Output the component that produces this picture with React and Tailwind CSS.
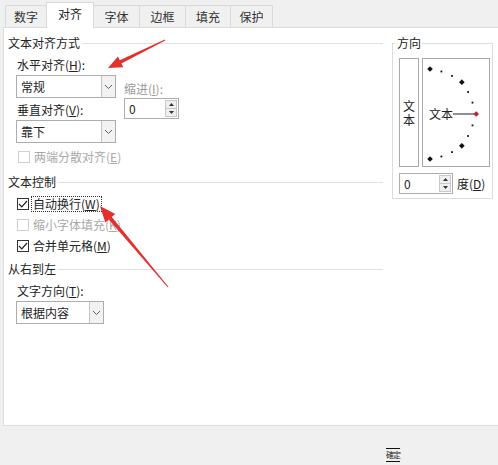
import React from "react";

const FONT = { fontFamily: '"Noto Sans CJK SC", "Noto Sans", sans-serif' };

function Tab({ label, w, active }) {
  if (active) {
    return (
      <div
        className={`${w} h-[26px] -mb-px bg-white border border-b-0 border-[#d9d9d9] -ml-px flex items-center justify-center text-[12px] leading-[14px] text-[#222] pb-[4px] relative z-10`}
      >
        {label}
      </div>
    );
  }
  return (
    <div
      className={`${w} h-[22px] bg-[#f0f0f0] border border-b-0 border-[#d9d9d9] -ml-px first:ml-0 flex items-center justify-center text-[12px] leading-[14px] text-[#333]`}
    >
      {label}
    </div>
  );
}

function Chevron() {
  return (
    <svg width="9" height="6" viewBox="0 0 9 6">
      <path d="M1 1 L4.5 4.5 L8 1" fill="none" stroke="#606060" strokeWidth="1" />
    </svg>
  );
}

function Select({ w, value }) {
  return (
    <div className={`${w} h-[23px] border border-[#adadad] bg-white flex`}>
      <div className="flex-1 flex items-center pl-[4px] text-[12px] leading-[14px] text-[#222]">{value}</div>
      <div className="w-[14px] border-l border-[#c4c4c4] bg-[#f2f2f2] flex items-center justify-center">
        <Chevron />
      </div>
    </div>
  );
}

function Spin({ w, value }) {
  return (
    <div className={`${w} h-[21px] border border-[#adadad] bg-white flex`}>
      <div className="flex-1 flex items-center pl-[4px] text-[12px] leading-[14px] text-[#222]">{value}</div>
      <div className="w-[12px] my-px mr-px flex flex-col border border-[#c8c8c8] bg-[#efefef]">
        <div className="flex-1 flex items-center justify-center border-b border-[#c8c8c8]">
          <svg width="5" height="3" viewBox="0 0 5 3"><path d="M0 3 L2.5 0 L5 3 Z" fill="#333" /></svg>
        </div>
        <div className="flex-1 flex items-center justify-center">
          <svg width="5" height="3" viewBox="0 0 5 3"><path d="M0 0 L2.5 3 L5 0 Z" fill="#333" /></svg>
        </div>
      </div>
    </div>
  );
}

function Check({ checked, disabled, label, hotkey, tail, focus }) {
  return (
    <div className="h-[21px] flex items-center">
      <div
        className={`w-[12px] h-[12px] border ${disabled ? "border-[#cfcfcf]" : "border-[#333]"} bg-white flex items-center justify-center`}
      >
        {checked && (
          <svg width="10" height="8" viewBox="0 0 10 8">
            <path d="M1 4 L3.8 6.8 L9 1" fill="none" stroke="#222" strokeWidth="1.2" />
          </svg>
        )}
      </div>
      <div
        className={`ml-[2px] px-[1px] text-[12px] leading-[14px] ${disabled ? "text-[#a8a8a8]" : "text-[#222]"} ${focus ? "border border-dotted border-[#333]" : "border border-transparent"}`}
      >
        {label}(<span className="underline">{hotkey}</span>){tail}
      </div>
    </div>
  );
}

function Heading({ text }) {
  return (
    <div className="flex items-center text-[12px] leading-[14px] text-[#222]">
      <span>{text}</span>
      <div className="flex-1 h-px bg-[#e0e0e0] ml-[2px]" />
    </div>
  );
}

function Dial() {
  const cx = 7;
  const cy = 55;
  const items = [];
  for (let a = 90; a >= -90; a -= 15) {
    const rad = (a * Math.PI) / 180;
    const big = a === 90 || a === 45 || a === -45 || a === -90;
    if (a === 0) continue;
    const r = big ? 45 : 44;
    const x = cx + r * Math.cos(rad);
    const y = cy - r * Math.sin(rad);
    if (big) {
      items.push(
        <rect key={a} x={x - 2} y={y - 2} width="4" height="4" fill="#111" transform={`rotate(45 ${x} ${y})`} />
      );
    } else {
      items.push(<rect key={a} x={x - 0.9} y={y - 0.9} width="1.8" height="1.8" fill="#111" />);
    }
  }
  return (
    <div className="relative w-[68px] h-[109px] border border-[#a8a8a8] bg-white">
      <svg className="absolute inset-0" width="68" height="109" viewBox="0 0 68 109">
        {items}
        <line x1="30" y1="55" x2="51" y2="55" stroke="#222" strokeWidth="1" />
        <rect x={51.2} y={53} width="4" height="4" fill="#b3262a" transform="rotate(45 53.2 55)" />
      </svg>
      <span className="absolute left-[6px] top-[48px] text-[12px] leading-[14px] text-[#222]">文本</span>
    </div>
  );
}

export default function App() {
  return (
    <div className="relative w-[498px] h-[465px] bg-[#f0f0f0] overflow-hidden" style={FONT}>
      {/* Tabs */}
      <div className="h-[27px] flex items-end pl-[5px]">
        <Tab label="数字" w="w-[42px]" />
        <Tab label="对齐" w="w-[48px]" active />
        <Tab label="字体" w="w-[47px]" />
        <Tab label="边框" w="w-[47px]" />
        <Tab label="填充" w="w-[46px]" />
        <Tab label="保护" w="w-[43px]" />
      </div>

      {/* Panel */}
      <div className="ml-[3px] h-[399px] bg-white border-l border-t border-b border-[#dcdcdc] flex">
        {/* Left column */}
        <div className="w-[379px] pl-[4px] flex flex-col">
          <div className="mt-[8px]">
            <Heading text="文本对齐方式" />
          </div>
          <div className="pl-[8px] flex">
            <div className="w-[100px] flex flex-col">
              <div className="mt-[8px] pl-px text-[12px] leading-[14px] text-[#222]">
                水平对齐(<span className="underline">H</span>):
              </div>
              <div className="mt-[3px]">
                <Select w="w-[100px]" value="常规" />
              </div>
              <div className="mt-[5px] pl-px text-[12px] leading-[14px] text-[#222]">
                垂直对齐(<span className="underline">V</span>):
              </div>
              <div className="mt-[3px]">
                <Select w="w-[100px]" value="靠下" />
              </div>
            </div>
            <div className="ml-[8px] flex flex-col">
              <div className="mt-[32px] text-[12px] leading-[14px] text-[#9a9a9a]">
                缩进(<span className="underline">I</span>):
              </div>
              <div className="mt-[2px]">
                <Spin w="w-[55px]" value="0" />
              </div>
            </div>
          </div>
          <div className="pl-[10px] mt-[3px]">
            <Check disabled label="两端分散对齐" hotkey="E" />
          </div>
          <div className="mt-[8px]">
            <Heading text="文本控制" />
          </div>
          <div className="pl-[9px] mt-[4px] flex flex-col">
            <Check checked label="自动换行" hotkey="W" focus />
            <Check disabled label="缩小字体填充" hotkey="K" />
            <Check checked label="合并单元格" hotkey="M" />
          </div>
          <div className="mt-[6px]">
            <Heading text="从右到左" />
          </div>
          <div className="pl-[8px] flex flex-col">
            <div className="mt-[8px] pl-px text-[12px] leading-[14px] text-[#222]">
              文字方向(<span className="underline">T</span>):
            </div>
            <div className="mt-[3px]">
              <Select w="w-[88px]" value="根据内容" />
            </div>
          </div>
        </div>

        {/* Right group: 方向 */}
        <div className="ml-[9px] mt-[15px] relative w-[101px] h-[156px] border border-[#dcdcdc]">
          <span className="absolute -top-[8px] left-[3px] bg-white px-[1px] text-[12px] leading-[14px] text-[#222]">
            方向
          </span>
          <div className="mt-[14px] ml-[6px] flex gap-[3px]">
            <div className="w-[20px] h-[109px] border border-[#a8a8a8] flex flex-col items-center justify-center gap-[1px] text-[12px] leading-[13px] text-[#222]">
              <span className="block">文</span>
              <span className="block">本</span>
            </div>
            <Dial />
          </div>
          <div className="mt-[6px] ml-[6px] flex items-center">
            <Spin w="w-[54px]" value="0" />
            <span className="ml-[4px] text-[12px] leading-[14px] text-[#222]">
              度(<span className="underline">D</span>)
            </span>
          </div>
        </div>
      </div>

      {/* Bottom bar */}
      <div className="h-[39px] pl-[386px] pt-[13px]">
        <span className="inline-block border-t border-b border-[#111] text-[8px] leading-[12px] tracking-[-1px] text-[#222]">
          確定
        </span>
      </div>

      {/* Annotation arrows */}
      <svg className="absolute inset-0 pointer-events-none" width="498" height="465" viewBox="0 0 498 465">
        <polygon
          points="164.8,39.55 119.8,60.2 117.9,56.45 108,68 123.2,67.2 121.4,63.4 165.2,40.45"
          fill="#e3302d"
        />
        <polygon
          points="168.38,286.68 111.82,216.97 115.27,214.08 100,206 105.31,222.44 108.76,219.55 167.62,287.32"
          fill="#e3302d"
        />
      </svg>
    </div>
  );
}
